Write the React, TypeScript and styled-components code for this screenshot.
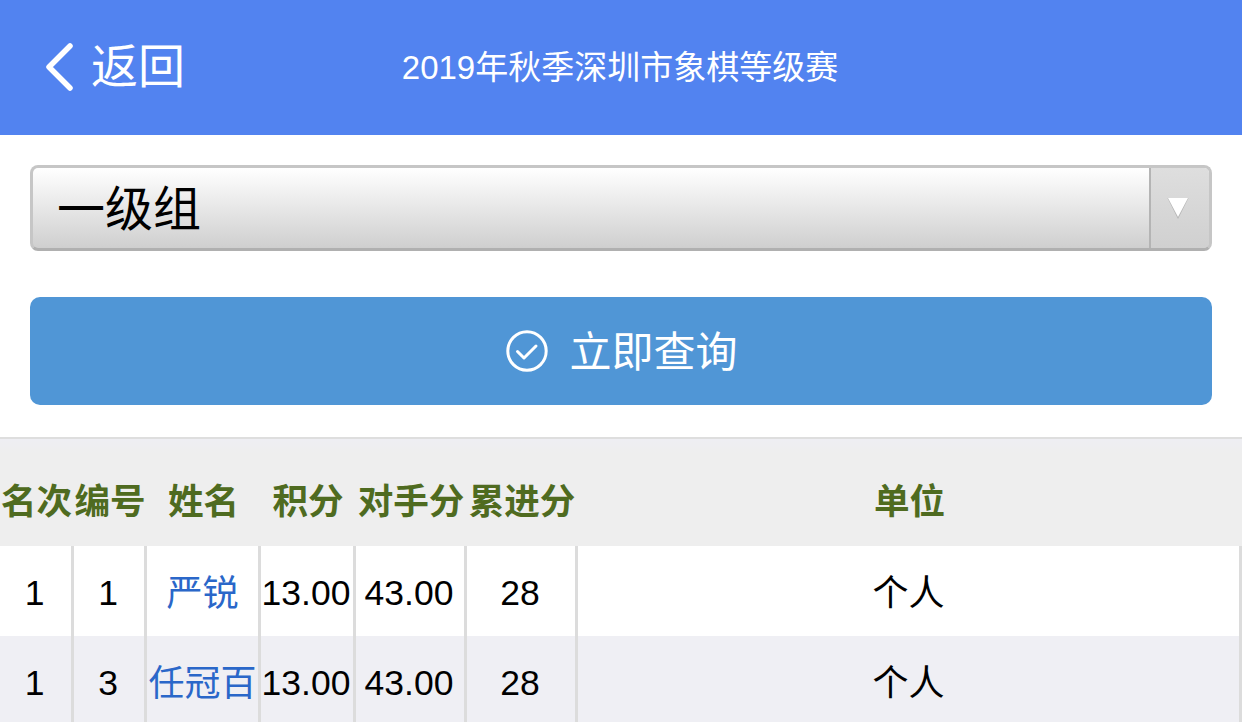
import React from 'react';
import styled, { createGlobalStyle } from 'styled-components';

const GlobalStyle = createGlobalStyle`
	html, body {
		margin: 0;
		padding: 0;
		background: #fff;
		overflow: hidden;
		font-family: 'Liberation Sans', 'Noto Sans CJK SC', sans-serif;
	}
`;

const columns = [
	{ key: 'rank', title: '名次' },
	{ key: 'no', title: '编号' },
	{ key: 'name', title: '姓名' },
	{ key: 'score', title: '积分' },
	{ key: 'opp', title: '对手分' },
	{ key: 'total', title: '累进分' },
	{ key: 'unit', title: '单位' }
];

const rows = [
	{ rank: '1', no: '1', name: '严锐', score: '13.00', opp: '43.00', total: '28', unit: '个人' },
	{ rank: '1', no: '3', name: '任冠百', score: '13.00', opp: '43.00', total: '28', unit: '个人' }
];

const App = () => {
	return (
		<Page>
			<GlobalStyle />
			<Header>
				<BackLink>
					<svg width='30' height='50' viewBox='0 0 30 50'>
						<path d='M26 4 L5 25 L26 46' fill='none' stroke='#fff' strokeWidth='5.5' strokeLinecap='round' strokeLinejoin='round' />
					</svg>
					<span>返回</span>
				</BackLink>
				<Title>2019年秋季深圳市象棋等级赛</Title>
			</Header>
			<Form>
				<Select>
					<SelectText>一级组</SelectText>
					<SelectArrow>
						<svg width='22' height='22' viewBox='0 0 22 22'>
							<path d='M0.5 1 H21.5 L11 22 Z' fill='#b4b4b4' />
							<path d='M1 1 H21 L11 20 Z' fill='#fff' />
						</svg>
					</SelectArrow>
				</Select>
				<QueryButton>
					<svg width='42' height='42' viewBox='0 0 42 42'>
						<circle cx='21' cy='21' r='19.2' fill='none' stroke='#fff' strokeWidth='3' />
						<path d='M11.5 21.5 L18 28 L30 16' fill='none' stroke='#fff' strokeWidth='3' strokeLinecap='round' strokeLinejoin='round' />
					</svg>
					<ButtonLabel>立即查询</ButtonLabel>
				</QueryButton>
			</Form>
			<Results>
				<TopBand />
				<Grid>
					{columns.map(c => (
						<HeadCell key={c.key}>{c.title}</HeadCell>
					))}
					{rows.map((row, i) => (
						<React.Fragment key={i}>
							{columns.map(c => (
								<Cell key={c.key} $alt={i % 2 === 1} $numeric={c.key !== 'name' && c.key !== 'unit'}>
									{c.key === 'name' ? <PlayerLink>{row.name}</PlayerLink> : row[c.key]}
								</Cell>
							))}
						</React.Fragment>
					))}
				</Grid>
			</Results>
		</Page>
	);
};

const Page = styled.main`
	width: 1242px;
	height: 722px;
	overflow: hidden;
	background: #fff;
`;

const Header = styled.header`
	position: relative;
	height: 135px;
	background: #5283f0;
	color: #fff;
	display: flex;
	align-items: center;
	justify-content: center;
	padding-right: 2px;
	box-sizing: border-box;
`;

const BackLink = styled.a`
	position: absolute;
	left: 44px;
	top: 42px;
	display: flex;
	align-items: center;
	gap: 17px;
	font-size: 47px;
	line-height: 50px;
`;

const Title = styled.h1`
	margin: 0;
	font-size: 33px;
	font-weight: 400;
	line-height: 135px;
`;

const Form = styled.section`
	padding: 30px 30px 32px;
	display: flex;
	flex-direction: column;
	gap: 46px;
`;

const Select = styled.div`
	height: 86px;
	box-sizing: border-box;
	border: 3px solid #c6c6c6;
	border-bottom-color: #b0b0b0;
	border-radius: 8px;
	background: linear-gradient(to bottom, #ffffff 0%, #cfcfcf 100%);
	display: flex;
	align-items: stretch;
	overflow: hidden;
`;

const SelectText = styled.div`
	flex: 1;
	padding-left: 24px;
	font-size: 48px;
	line-height: 84px;
	color: #000;
`;

const SelectArrow = styled.div`
	width: 60px;
	padding-right: 4px;
	box-sizing: border-box;
	border-left: 2px solid #b4b4b4;
	background: linear-gradient(to bottom, #dedede 0%, #d0d0d0 100%);
	display: flex;
	align-items: center;
	justify-content: center;
`;

const QueryButton = styled.button`
	height: 108px;
	border: none;
	border-radius: 10px;
	background: #5096d6;
	color: #fff;
	font-family: inherit;
	font-size: 42px;
	display: flex;
	align-items: center;
	justify-content: center;
	gap: 21px;
	padding: 0 0 0 2px;
`;

const ButtonLabel = styled.span`
	line-height: 42px;
	margin-top: 4px;
`;

const Results = styled.section`
	border-top: 2px solid #dedede;
`;

const TopBand = styled.div`
	height: 14px;
	background: linear-gradient(to bottom, #eeeef3, #eeeeee);
`;

const Grid = styled.div`
	display: grid;
	grid-template-columns: 74px 73px 114px 95px 111px 111px 1fr;
	grid-template-rows: 93px 90px 90px;
`;

const HeadCell = styled.div`
	box-sizing: border-box;
	padding: 0 1px 2px 0;
	background: #eeeeee;
	color: #4f6b20;
	font-size: 35.6px;
	font-weight: 700;
	white-space: nowrap;
	display: flex;
	align-items: center;
	justify-content: center;
`;

const Cell = styled.div<{ $alt: boolean; $numeric: boolean }>`
	box-sizing: border-box;
	background: ${p => (p.$alt ? '#efeff4' : '#fff')};
	border-right: 3px solid #dcdcdc;
	color: #000;
	font-size: ${p => (p.$numeric ? '35.5px' : '36px')};
	padding: ${p => (p.$numeric ? '5px 2px 0 0' : '0 0 2px 0')};
	white-space: nowrap;
	display: flex;
	align-items: center;
	justify-content: center;
`;

const PlayerLink = styled.a`
	color: #2a67c9;
`;

export default App;
